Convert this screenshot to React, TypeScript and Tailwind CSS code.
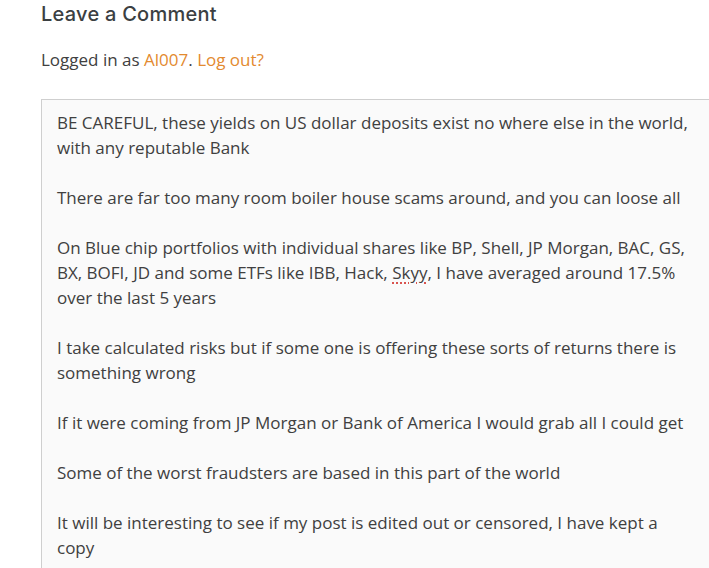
const paragraphs: React.ReactNode[][] = [
    [
        'BE CAREFUL, these yields on US dollar deposits exist no where else in the world,',
        'with any reputable Bank',
    ],
    ['There are far too many room boiler house scams around, and you can loose all'],
    [
        'On Blue chip portfolios with individual shares like BP, Shell, JP Morgan, BAC, GS,',
        <>
            BX, BOFI, JD and some ETFs like IBB, Hack,{' '}
            <span className="underline decoration-dotted decoration-[#d9534f] decoration-2 underline-offset-[3px]">Skyy</span>, I have averaged around 17.5%
        </>,
        'over the last 5 years',
    ],
    [
        'I take calculated risks but if some one is offering these sorts of returns there is',
        'something wrong',
    ],
    ['If it were coming from JP Morgan or Bank of America I would grab all I could get'],
    ['Some of the worst fraudsters are based in this part of the world'],
    [
        'It will be interesting to see if my post is edited out or censored, I have kept a',
        'copy',
    ],
];

const App = () => {
    return (
        <div className="h-[568px] w-[709px] overflow-hidden bg-white font-['Open_Sans',sans-serif] text-[#404040]">
            <div className="pl-[41px]">
                <h3 className="pt-[1px] font-['Inter',sans-serif] text-[20px] leading-[26px] font-medium tracking-[0.25px] text-[#3b3f42]">
                    Leave a Comment
                </h3>
                <p className="mt-[20px] text-[17px] leading-[26px]">
                    Logged in as <a className="text-[#e38a2f]">Al007</a>.{' '}
                    <a className="text-[#e38a2f]">Log out?</a>
                </p>
                <div className="mt-[26px] h-[500px] w-[720px] border border-[#cfcfcf] bg-[#fafafa] px-[15px] pt-[10px]">
                    {paragraphs.map((lines, i) => (
                        <div key={i} className="mb-[25px] text-[17px] leading-[25px] whitespace-nowrap">
                            {lines.map((l, j) => (
                                <div key={j}>{l}</div>
                            ))}
                        </div>
                    ))}
                </div>
            </div>
        </div>
    );
};

export default App;
